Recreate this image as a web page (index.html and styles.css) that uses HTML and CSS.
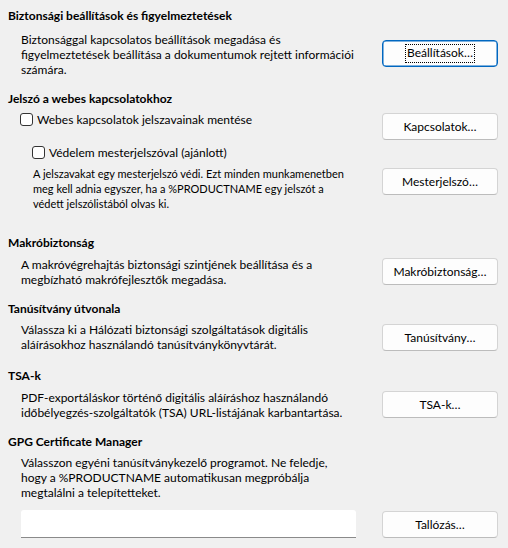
FILE: index.html
```html
<!DOCTYPE html>
<html lang="hu">
<head>
<meta charset="utf-8">
<title>Biztonság</title>
<link rel="stylesheet" href="styles.css">
</head>
<body>
<div class="page">
  <section class="sec sec-1">
    <div class="h">Biztonsági beállítások és figyelmeztetések</div>
    <div class="row row-1">
      <p class="desc">Biztonsággal kapcsolatos beállítások megadása és<br>figyelmeztetések beállítása a dokumentumok rejtett információi<br>számára.</p>
      <button class="btn btn-focus b-1"><span class="focus">Beállítások…</span></button>
    </div>
  </section>

  <section class="sec sec-2">
    <div class="h">Jelszó a webes kapcsolatokhoz</div>
    <div class="row pw">
      <div class="pw-left">
        <label class="cb cb-1"><span class="box"></span><span class="cb-text">Webes kapcsolatok jelszavainak mentése</span></label>
        <label class="cb cb-2"><span class="box"></span><span class="cb-text">Védelem mesterjelszóval (ajánlott)</span></label>
        <p class="small">A jelszavakat egy mesterjelszó védi. Ezt minden munkamenetben<br>meg kell adnia egyszer, ha a %PRODUCTNAME egy jelszót a<br>védett jelszólistából olvas ki.</p>
      </div>
      <div class="pw-right">
        <button class="btn">Kapcsolatok…</button>
        <button class="btn">Mesterjelszó…</button>
      </div>
    </div>
  </section>

  <section class="sec sec-3">
    <div class="h">Makróbiztonság</div>
    <div class="row row-3">
      <p class="desc">A makróvégrehajtás biztonsági szintjének beállítása és a<br>megbízható makrófejlesztők megadása.</p>
      <button class="btn b-3">Makróbiztonság…</button>
    </div>
  </section>

  <section class="sec sec-4">
    <div class="h">Tanúsítvány útvonala</div>
    <div class="row row-4">
      <p class="desc">Válassza ki a Hálózati biztonsági szolgáltatások digitális<br>aláírásokhoz használandó tanúsítványkönyvtárát.</p>
      <button class="btn b-4">Tanúsítvány…</button>
    </div>
  </section>

  <section class="sec sec-5">
    <div class="h">TSA-k</div>
    <div class="row row-5">
      <p class="desc">PDF-exportáláskor történő digitális aláíráshoz használandó<br>időbélyegzés-szolgáltatók (TSA) URL-listájának karbantartása.</p>
      <button class="btn b-5">TSA-k…</button>
    </div>
  </section>

  <section class="sec sec-6">
    <div class="h">GPG Certificate Manager</div>
    <p class="desc desc-6">Válasszon egyéni tanúsítványkezelő programot. Ne feledje,<br>hogy a %PRODUCTNAME automatikusan megpróbálja<br>megtalálni a telepítetteket.</p>
    <div class="row row-6">
      <input class="field" type="text" aria-label="Tanúsítványkezelő">
      <button class="btn">Tallózás…</button>
    </div>
  </section>
</div>
</body>
</html>
```

FILE: styles.css
```css
html, body {
  margin: 0;
  padding: 0;
}
body {
  background: #f0f0f0;
  color: #000;
  font-family: "Segoe UI", Lato, "Noto Sans", sans-serif;
  font-size: 12px;
  width: 508px;
  height: 548px;
  overflow: hidden;
}
.page {
  padding: 8px 10px 0 8px;
}
.h {
  font-weight: 700;
  line-height: 16px;
  white-space: nowrap;
}
p {
  margin: 0;
}
.row {
  display: flex;
  align-items: flex-start;
  justify-content: space-between;
}
.desc {
  margin-left: 13px;
  line-height: 15px;
  white-space: nowrap;
}
.btn {
  flex: none;
  width: 116px;
  height: 27px;
  box-sizing: border-box;
  padding: 0;
  background: #fdfdfd;
  border: 1px solid #d4d4d4;
  border-bottom-color: #bcbcbc;
  border-radius: 4px;
  font: inherit;
  color: #000;
  display: flex;
  align-items: center;
  justify-content: center;
}
.btn-focus {
  border: 1px solid #0067c0;
  box-shadow: inset 0 0 0 0.5px #0067c0;
}
.focus {
  outline: 1px dotted #000;
  padding: 1px 1px 2px 1px;
  line-height: 14px;
}

/* section 1 */
.row-1 { margin-top: 8px; }
.b-1 { margin-top: 8px; }

/* section 2 */
.sec-2 { margin-top: 14px; }
.pw-left {
  display: flex;
  flex-direction: column;
  padding-top: 5px;
}
.pw-right {
  display: flex;
  flex-direction: column;
  gap: 28px;
  padding-top: 6px;
}
.cb {
  display: flex;
  align-items: center;
  height: 15px;
  line-height: 15px;
  white-space: nowrap;
}
.cb-1 { margin-left: 12px; }
.cb-2 { margin-left: 24px; margin-top: 18px; }
.box {
  width: 13px;
  height: 13px;
  box-sizing: border-box;
  border: 1px solid #333;
  border-radius: 3px;
  background: #fff;
  margin-right: 4px;
  flex: none;
}
.small {
  margin-left: 25px;
  margin-top: 6px;
  font-size: 11px;
  line-height: 15px;
  white-space: nowrap;
}

/* section 3 */
.sec-3 { margin-top: 24px; }
.row-3 { margin-top: 6px; }
.b-3 { margin-top: 1px; }

/* section 4 */
.sec-4 { margin-top: 14px; }
.row-4 { margin-top: 5px; }
.b-4 { margin-top: 2px; }

/* section 5 */
.sec-5 { margin-top: 16px; }
.row-5 { margin-top: 6px; }
.b-5 { margin-top: 1px; }

/* section 6 */
.sec-6 { margin-top: 14px; }
.desc-6 { margin-top: 5px; }
.row-6 {
  margin-top: 10px;
  align-items: flex-end;
}
.field {
  margin-left: 13px;
  width: 335px;
  height: 28px;
  box-sizing: border-box;
  background: #fff;
  border: none;
  border-bottom: 1px solid #8a8a8a;
  border-radius: 3px 3px 0 0;
  padding: 0 6px;
  font: inherit;
  outline: none;
}
```
